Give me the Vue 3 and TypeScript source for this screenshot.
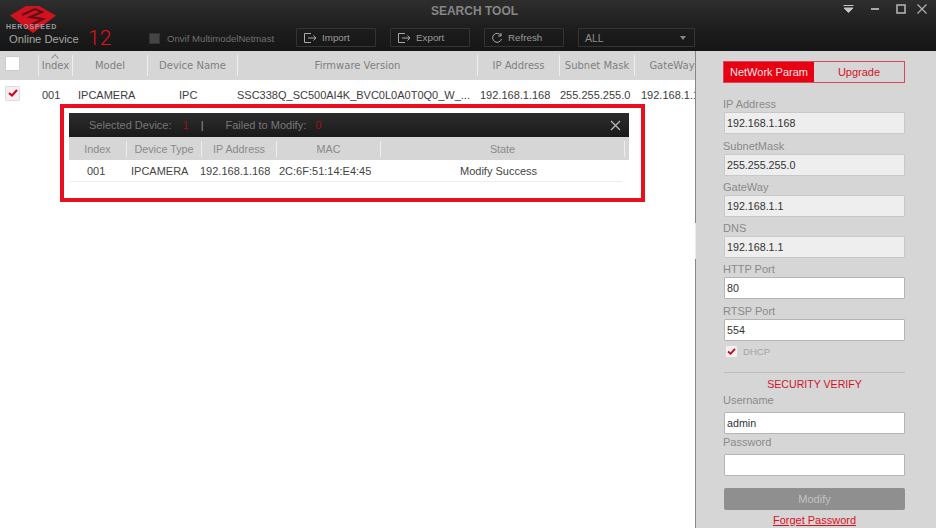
<script setup lang="ts">
type Field = { label: string, value: string, editable: boolean }

const columns = [
  { name: 'Index', width: 34 },
  { name: 'Model', width: 75 },
  { name: 'Device Name', width: 90 },
  { name: 'Firmware Version', width: 240 },
  { name: 'IP Address', width: 82 },
  { name: 'Subnet Mask', width: 75 },
  { name: 'GateWay', width: 75 },
]

// cell text is left aligned in the real list, so widths = distance to next text start
const rowCells = [
  { text: '001', width: 36 },
  { text: 'IPCAMERA', width: 101 },
  { text: 'IPC', width: 58 },
  { text: 'SSC338Q_SC500AI4K_BVC0L0A0T0Q0_W_...', width: 243 },
  { text: '192.168.1.168', width: 80 },
  { text: '255.255.255.0', width: 81 },
  { text: '192.168.1.1', width: 90 },
]

const resultColumns = [
  { name: 'Index', width: 58 },
  { name: 'Device Type', width: 75 },
  { name: 'IP Address', width: 75 },
  { name: 'MAC', width: 104 },
  { name: 'State', width: 244 },
]

const resultCells = [
  { text: '001', width: 44 },
  { text: 'IPCAMERA', width: 69 },
  { text: '192.168.1.168', width: 79 },
  { text: '2C:6F:51:14:E4:45', width: 181 },
  { text: 'Modify Success', width: 150 },
]

const fields: Field[] = [
  { label: 'IP Address', value: '192.168.1.168', editable: false },
  { label: 'SubnetMask', value: '255.255.255.0', editable: false },
  { label: 'GateWay', value: '192.168.1.1', editable: false },
  { label: 'DNS', value: '192.168.1.1', editable: false },
  { label: 'HTTP Port', value: '80', editable: true },
  { label: 'RTSP Port', value: '554', editable: true },
]
</script>

<template>
  <div class="app">
    <header class="header">
      <div class="title-row">
        <span class="title">SEARCH TOOL</span>
        <div class="win-buttons">
          <svg width="11" height="10" viewBox="0 0 11 10"><path d="M0.5 1.5h10M1 4h9L5.5 8.5z" fill="#c4c4c4" stroke="#c4c4c4" stroke-width="1" /></svg>
          <svg width="10" height="10" viewBox="0 0 10 10"><path d="M1 5h8" stroke="#a8a8a8" stroke-width="2" /></svg>
          <svg width="10" height="10" viewBox="0 0 10 10"><rect x="1" y="1" width="8" height="8" fill="none" stroke="#b0b0b0" stroke-width="1.6" /></svg>
          <svg class="win-close" width="10" height="10" viewBox="0 0 10 10"><path d="M0.5 0.5l9 9M9.5 0.5l-9 9" stroke="#b0b0b0" stroke-width="1.2" /></svg>
        </div>
      </div>
      <div class="tool-row">
        <div class="brand">
          <svg class="logo" width="48" height="29" viewBox="0 0 48 29">
            <path d="M1 10.5L17 1L30 1L47 10.5L24 28Z" fill="#d3121f" />
            <path d="M13 10L26 4L33 7L21 12L34 14L22 20" fill="none" stroke="#5a1016" stroke-width="2" />
          </svg>
          <span class="logo-text">HEROSPEED</span>
        </div>
        <span class="online">Online Device</span>
        <span class="count">12</span>
        <label class="onvif"><i class="onvif-box"></i>Onvif MultimodelNetmast</label>
        <button class="tool-btn">
          <svg width="14" height="12" viewBox="0 0 14 12"><path d="M8 1.5H1.5v9H8M5 6h8M10.5 3.5L13 6l-2.5 2.5" fill="none" stroke="#aaa" /></svg>
          Import
        </button>
        <button class="tool-btn">
          <svg width="14" height="12" viewBox="0 0 14 12"><path d="M8 1.5H1.5v9H8M5 6h8M10.5 3.5L13 6l-2.5 2.5" fill="none" stroke="#aaa" /></svg>
          Export
        </button>
        <button class="tool-btn">
          <svg width="12" height="12" viewBox="0 0 12 12"><path d="M10 3.5A4.5 4.5 0 1 0 10.5 7M10 1v3H7" fill="none" stroke="#aaa" /></svg>
          Refresh
        </button>
        <div class="select"><span>ALL</span><i class="caret"></i></div>
      </div>
    </header>

    <div class="body">
      <main class="list">
        <div class="thead">
          <div class="check-cell"><i class="check blank"></i></div>
          <div v-for="col in columns" :key="col.name" class="th" :style="{ width: col.width + 'px' }">
            <span v-if="col.name === 'Index'" class="sort"></span>{{ col.name }}
          </div>
        </div>
        <div class="row">
          <div class="check-cell"><i class="check"><svg width="10" height="8" viewBox="0 0 10 8"><path d="M1 4l3 2.5L9 1" fill="none" stroke="#d0021b" stroke-width="2" /></svg></i></div>
          <div v-for="cell in rowCells" :key="cell.text" class="td" :style="{ width: cell.width + 'px' }">{{ cell.text }}</div>
        </div>

        <div class="highlight">
          <div class="dialog">
            <div class="dialog-bar">
              <span class="stat">Selected Device:</span>
              <b class="num first">1</b>
              <span class="sep">|</span>
              <span class="stat">Failed to Modify:</span>
              <b class="num">0</b>
              <svg class="close" width="11" height="11" viewBox="0 0 11 11"><path d="M1 1l9 9M10 1l-9 9" stroke="#bbb" stroke-width="1.2" /></svg>
            </div>
            <div class="dialog-head">
              <div v-for="col in resultColumns" :key="col.name" class="dh" :style="{ width: col.width + 'px' }">{{ col.name }}</div>
            </div>
            <div class="dialog-row">
              <div v-for="cell in resultCells" :key="cell.text" :style="{ width: cell.width + 'px' }">{{ cell.text }}</div>
            </div>
          </div>
        </div>
      </main>

      <aside class="panel">
        <i class="handle"></i>
        <div class="tabs">
          <span class="tab active">NetWork Param</span>
          <span class="tab">Upgrade</span>
        </div>
        <div v-for="f in fields" :key="f.label" class="field">
          <span class="label">{{ f.label }}</span>
          <div class="input" :class="{ readonly: !f.editable }">{{ f.value }}</div>
        </div>
        <div class="dhcp">
          <i class="check small"><svg width="9" height="7" viewBox="0 0 10 8"><path d="M1 4l3 2.5L9 1" fill="none" stroke="#c00a20" stroke-width="2" /></svg></i>
          <span>DHCP</span>
        </div>
        <div class="verify">SECURITY VERIFY</div>
        <div class="field short">
          <span class="label">Username</span>
          <div class="input">admin</div>
        </div>
        <div class="field short">
          <span class="label">Password</span>
          <div class="input"></div>
        </div>
        <button class="modify">Modify</button>
        <a class="forget">Forget Password</a>
      </aside>
    </div>
  </div>
</template>

<style>
html, body {
  margin: 0;
  background: #fff;
  overflow: hidden;
}
</style>

<style scoped>
.app {
  width: 936px;
  height: 528px;
  display: flex;
  flex-direction: column;
  font-family: "Liberation Sans", Arial, sans-serif;
  font-size: 11px;
  color: #444;
  overflow: hidden;
}

.header {
  height: 51px;
  background: linear-gradient(#2e2e2e, #1c1c1c 60%, #161616);
  flex: none;
}

.title-row {
  height: 21px;
  display: flex;
  align-items: center;
  justify-content: center;
  position: relative;
}

.title {
  font-size: 12px;
  font-weight: bold;
  color: #868686;
  margin-left: 13px;
}

.win-buttons {
  position: absolute;
  right: 9px;
  top: 4px;
  display: flex;
  gap: 16px;
}

.win-close {
  margin-left: -5px;
}

.tool-row {
  height: 30px;
  display: flex;
  align-items: flex-start;
  position: relative;
}

.brand {
  position: absolute;
  left: 6px;
  top: -16px;
  width: 54px;
}

.logo {
  display: block;
  margin-left: 3px;
}

.logo-text {
  position: absolute;
  left: 0;
  top: 18px;
  font-size: 7px;
  font-weight: bold;
  letter-spacing: 0.8px;
  color: #9a9a9a;
  line-height: 8px;
}

.online {
  margin: 12px 0 0 9px;
  font-size: 11.2px;
  color: #a6a6a6;
  width: 79px;
}

.count {
  margin: 5px 0 0 0;
  font-family: Roboto, sans-serif;
  font-weight: 300;
  font-size: 21px;
  color: #e0101c;
  width: 61px;
}

.onvif {
  margin: 12px 0 0 0;
  width: 147px;
  display: flex;
  align-items: center;
  font-size: 9.6px;
  color: #6f6f6f;
}

.onvif-box {
  width: 9px;
  height: 9px;
  background: #444;
  border: 1px solid #333;
  margin-right: 7px;
}

.tool-btn {
  width: 80px;
  height: 19px;
  margin: 7px 14px 0 0;
  padding: 0 0 0 6px;
  display: flex;
  align-items: center;
  gap: 5px;
  background: transparent;
  border: 1px solid #343434;
  border-radius: 1px;
  color: #9a9a9a;
  font: 9.8px "Liberation Sans", Arial, sans-serif;
}

.select {
  width: 117px;
  height: 19px;
  margin-top: 7px;
  padding: 0 6px;
  box-sizing: border-box;
  display: flex;
  align-items: center;
  justify-content: space-between;
  border: 1px solid #343434;
  color: #8c8c8c;
  font-size: 10.5px;
}

.caret {
  border: 3px solid transparent;
  border-top: 4px solid #888;
  border-bottom: 0;
  margin-right: 2px;
}

.body {
  flex: 1;
  display: flex;
  min-height: 0;
}

.list {
  width: 695px;
  flex: none;
  position: relative;
  overflow: hidden;
  background: #fff;
}

.thead {
  height: 29px;
  display: flex;
  align-items: center;
  background: #d6d6d6;
  white-space: nowrap;
}

.check-cell {
  width: 38px;
  flex: none;
  padding-left: 5px;
  margin-top: -4px;
  box-sizing: border-box;
}

.check {
  width: 15px;
  height: 15px;
  display: flex;
  align-items: center;
  justify-content: center;
  background: #f7eef0;
  border: 1px solid #ddd;
  border-radius: 1px;
  box-sizing: border-box;
}

.check.blank {
  background: #fff;
  border-color: #ccc;
}

.th {
  flex: none;
  height: 21px;
  line-height: 21px;
  text-align: center;
  color: #7f7f7f;
  box-sizing: border-box;
  border-left: 1px solid #eee;
  position: relative;
  font-family: "DejaVu Sans", sans-serif;
  font-size: 10px;
}

.sort {
  position: absolute;
  left: 13px;
  top: 0;
  width: 5px;
  height: 5px;
  border-left: 1px solid #888;
  border-top: 1px solid #888;
  transform: rotate(45deg) scale(0.9);
}

.row {
  height: 30px;
  display: flex;
  align-items: center;
  white-space: nowrap;
}

.row .check-cell {
  width: 42px;
}

.td {
  flex: none;
  font-size: 11px;
  color: #3c3c3c;
}

.highlight {
  position: absolute;
  left: 60px;
  top: 53px;
  width: 585px;
  height: 98px;
  box-sizing: border-box;
  border: 4px solid #e8101f;
  background: #fff;
  padding: 5px 5px;
}

.dialog {
  width: 560px;
}

.dialog-bar {
  height: 24px;
  display: flex;
  align-items: center;
  padding-left: 20px;
  background: linear-gradient(#2c2c2c, #1a1a1a);
  color: #777;
  font-size: 11px;
  position: relative;
}

.num {
  margin-left: 9px;
  font-weight: normal;
  color: #a01018;
}

.num.first {
  margin-left: 11px;
  margin-right: 12px;
}

.sep {
  margin-right: 22px;
  color: #999;
}

.close {
  position: absolute;
  right: 8px;
  top: 7px;
}

.dialog-head {
  height: 23px;
  display: flex;
  align-items: center;
  background: #d6d6d6;
}

.dh {
  text-align: center;
  color: #8a8a8a;
  font-size: 10.8px;
  line-height: 16px;
  border-right: 1px solid #eee;
  box-sizing: border-box;
}

.dialog-row {
  width: 553px;
  height: 22px;
  padding-left: 18px;
  box-sizing: border-box;
  display: flex;
  align-items: center;
  border-bottom: 1px solid #eee;
  white-space: nowrap;
  font-size: 11px;
}

.panel {
  width: 241px;
  flex: none;
  box-sizing: border-box;
  padding: 10px 31px 0 28px;
  background: #d6d6d6;
  border-left: 1px solid #888;
  display: flex;
  flex-direction: column;
  position: relative;
}

.handle {
  position: absolute;
  left: -1px;
  top: 172px;
  width: 1px;
  height: 36px;
  background: #ececec;
}

.tabs {
  height: 20px;
  width: 180px;
  margin: 0 0 10px -1px;
  display: flex;
  border: 1px solid #d8485c;
}

.tab {
  flex: 1;
  line-height: 20px;
  text-align: center;
  color: #d0142c;
  font-size: 11px;
}

.tab.active {
  width: 90px;
  flex: none;
  background: #e60012;
  color: #f5e6e6;
}

.field {
  height: 41.3px;
  display: flex;
  flex-direction: column;
  justify-content: flex-end;
}

.field.short {
  height: 42px;
}

.field.short .label {
  margin-bottom: 3.5px;
}

.label {
  line-height: 16px;
  margin-left: -1px;
  font-size: 11px;
  color: #8a8a8a;
}

.input {
  height: 22px;
  width: 181px;
  box-sizing: border-box;
  padding-left: 2px;
  line-height: 21px;
  border: 1px solid #b4b4b4;
  border-radius: 1px;
  background: #fff;
  color: #333;
  font-size: 10.7px;
}

.input.readonly {
  background: #eeeeee;
  border-color: #c8c8c8;
}

.dhcp {
  height: 20px;
  margin-top: 1px;
  display: flex;
  align-items: center;
  font-size: 9.6px;
  color: #a4a4a4;
  padding-left: 2px;
  gap: 6px;
}

.check.small {
  width: 11px;
  height: 11px;
  border: 0;
}

.verify {
  margin-top: 10px;
  border-top: 1px solid #bcbcbc;
  padding-top: 4px;
  line-height: 15px;
  text-align: center;
  color: #d0142c;
  font-size: 10.6px;
}

.modify {
  margin-top: 12px;
  height: 22px;
  width: 181px;
  border: 0;
  border-radius: 2px;
  background: #8f8f8f;
  color: #c2c2c2;
  font: 11px "Liberation Sans", Arial, sans-serif;
}

.forget {
  margin-top: 4px;
  text-align: center;
  color: #d8101f;
  text-decoration: underline;
  font-size: 11px;
}
</style>
